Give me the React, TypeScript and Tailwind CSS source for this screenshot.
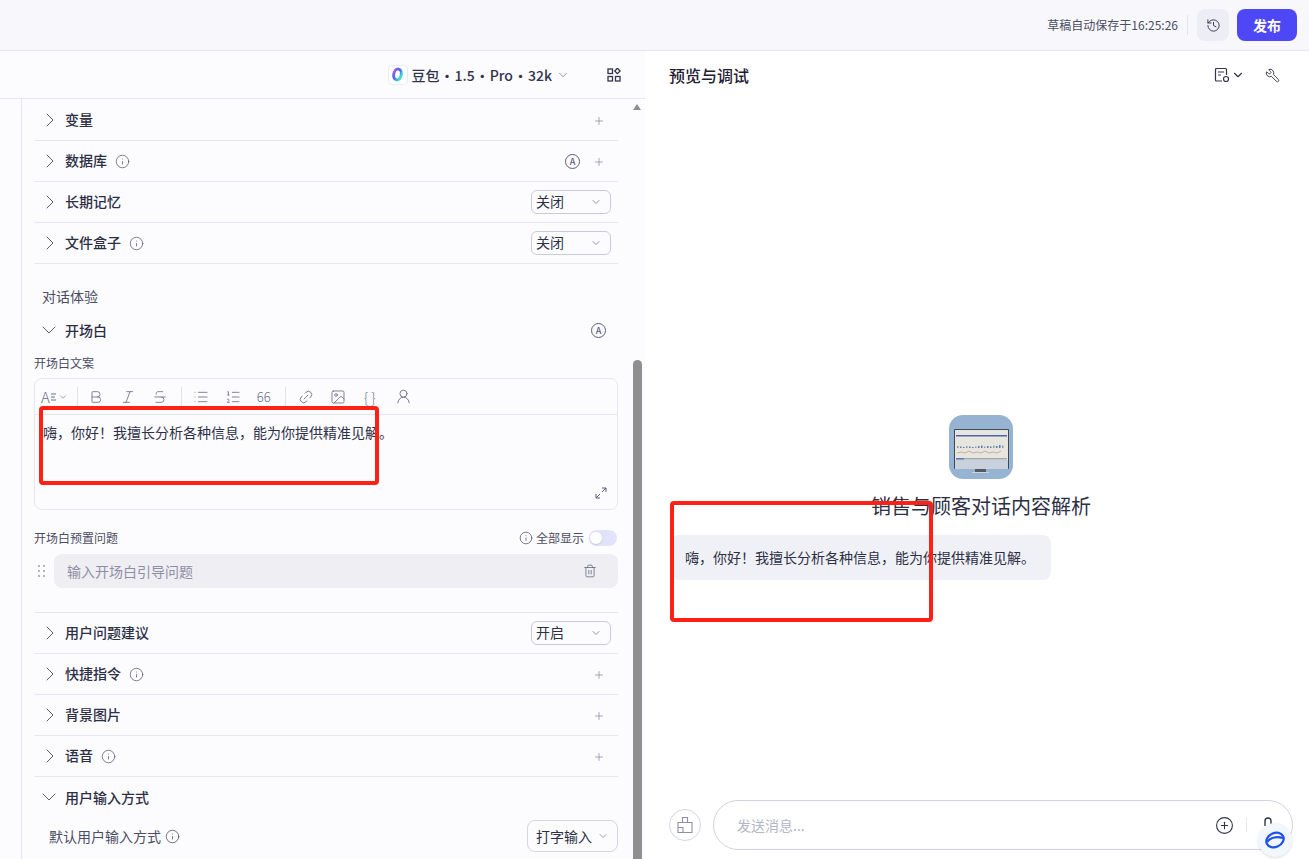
import React from "react";
import {
  ChevronRight, ChevronDown, Plus, Info, History, Wrench, Bold, Italic, Strikethrough, List, ListOrdered,
  Link2, Image, UserRound, Trash2, CirclePlus,
} from "lucide-react";

const font = "font-['Noto_Sans_CJK_SC','Noto_Sans',sans-serif]";

function CircleA() {
  return (
    <span className="flex h-[15px] w-[15px] items-center justify-center rounded-full border border-[#5b5d75] text-[9px] font-medium leading-none text-[#5b5d75]">
      A
    </span>
  );
}

function Sel({ label }: { label: string }) {
  return (
    <div className="flex h-[24px] w-[80px] items-center justify-between rounded-md border border-[#c9cbdc] pl-[4px] pr-[8px] text-[14px] text-[#2d2f45]">
      <span className="pb-[2px]">{label}</span>
      <ChevronDown size={12} strokeWidth={1.5} className="text-[#6b6d85]" />
    </div>
  );
}

function Row({ title, info, a, plus, sel }: { title: string; info?: boolean; a?: boolean; plus?: boolean; sel?: string }) {
  return (
    <div className="flex h-[41px] shrink-0 items-center border-b border-[#e6e7f0] pr-[7px]">
      <ChevronRight size={24} strokeWidth={1} className="ml-[4px] text-[#5b5d75]" />
      <span className="ml-[3px] pb-[2px] text-[14px] font-medium text-[#2d2f45]">{title}</span>
      {info && <Info size={15} strokeWidth={1.25} className="ml-[8px] text-[#5b5d75]" />}
      <div className="ml-auto flex items-center">
        {a && <CircleA />}
        {plus && <Plus size={12} strokeWidth={1.5} className="ml-[13px] mr-[6px] mt-[1px] text-[#8a8ca0]" />}
        {sel && <Sel label={sel} />}
      </div>
    </div>
  );
}

const bars = [8, 11, 14, 17, 20, 23, 26, 29, 32, 35, 38, 41, 44, 47, 50, 53];
const heights = [2, 1.5, 1, 2, 1.5, 1, 1.5, 2, 2.5, 1.5, 2, 1.5, 2.5, 2, 3, 2.5];

export default function App() {
  return (
    <div className={`relative flex h-screen w-full flex-col overflow-hidden bg-white ${font}`}>
      {/* Top bar */}
      <header className="flex h-[51px] shrink-0 items-center justify-end border-b border-[#e4e5f0] bg-[#f8f8fc] pr-[12px]">
        <span className="text-[12px] text-[#4b4d63]">草稿自动保存于16:25:26</span>
        <span className="ml-[9px] h-[20px] w-px bg-[#e4e5ec]" />
        <button className="ml-[9px] flex h-[32px] w-[32px] items-center justify-center rounded-lg bg-[#ecedf5] text-[#33344a]">
          <History size={15} strokeWidth={1.5} />
        </button>
        <button className="ml-[8px] flex h-[32px] w-[60px] items-center justify-center rounded-lg bg-[#4d47f5] text-[14px] font-bold text-white">
          发布
        </button>
      </header>

      <div className="flex min-h-0 flex-1">
        {/* Left */}
        <section className="flex w-[645px] shrink-0 flex-col bg-[#fcfcff]">
          <div className="flex h-[48px] shrink-0 items-center justify-end border-b border-[#e6e7f0] pr-[24px]">
            <span className="flex h-[20px] w-[20px] items-center justify-center rounded-[4px] border border-[#ebebf2] bg-white">
              <svg width="13" height="15" viewBox="0 0 13 15" fill="none">
                <defs>
                  <linearGradient id="dou" x1="0" y1="0" x2="1" y2="0.600">
                    <stop offset="0" stopColor="#b05cf0" />
                    <stop offset="0.55" stopColor="#3f6cf5" />
                    <stop offset="1" stopColor="#3fe0c8" />
                  </linearGradient>
                </defs>
                <ellipse cx="6.500" cy="7.500" rx="3.800" ry="5.500" stroke="url(#dou)" strokeWidth="3" transform="rotate(12 6.500 7.500)" />
              </svg>
            </span>
            <span className="ml-[4px] mt-[2px] flex items-center text-[14px] font-medium text-[#33344a]">
              <span>豆包</span>
              <span className="w-[15px] text-center">•</span>
              <span>1.5</span>
              <span className="w-[15px] text-center">•</span>
              <span>Pro</span>
              <span className="w-[15px] text-center">•</span>
              <span>32k</span>
            </span>
            <ChevronDown size={14} strokeWidth={1.25} className="ml-[4px] text-[#6b6d85]" />
            <svg className="ml-[37px] text-[#33344a]" width="14" height="14" viewBox="0 0 14 14" fill="none" stroke="currentColor" strokeWidth="1.3">
              <rect x="1" y="1" width="4.500" height="4.500" />
              <rect x="1" y="8.500" width="4.500" height="4.500" />
              <rect x="8.500" y="8.500" width="4.500" height="4.500" />
              <rect x="8.500" y="1" width="3.800" height="3.800" transform="rotate(45 10.400 2.900)" />
            </svg>
          </div>

          <div className="flex min-h-0 flex-1">
            <div className="w-[22px] shrink-0 border-r border-[#e6e7f0]" />
            <div className="flex min-w-0 flex-1 flex-col overflow-hidden pl-[12px] pr-[14px] pt-[1px]">
              <Row title="变量" plus />
              <Row title="数据库" info a plus />
              <Row title="长期记忆" sel="关闭" />
              <Row title="文件盒子" info sel="关闭" />

              <div className="mt-[23px] shrink-0 pl-[8px] text-[14px] leading-[18px] text-[#4b4d63]">对话体验</div>
              <div className="mt-[13px] flex h-[24px] shrink-0 items-center pr-[12px]">
                <ChevronDown size={24} strokeWidth={1} className="ml-[3px] text-[#5b5d75]" />
                <span className="ml-[4px] text-[14px] font-medium text-[#2d2f45]">开场白</span>
                <span className="ml-auto"><CircleA /></span>
              </div>

              <div className="mt-[13px] shrink-0 text-[12px] leading-[16px] text-[#4b4d63]">开场白文案</div>
              <div className="mt-[7px] flex h-[132px] shrink-0 flex-col rounded-lg border border-[#e6e7f0]">
                <div className="flex h-[36px] shrink-0 items-center border-b border-[#e6e7f0] pl-[6px] text-[#6b6d85]">
                  <span className="text-[15px] font-light leading-none">A</span>
                  <svg className="ml-[1px]" width="5" height="10" viewBox="0 0 5 10" stroke="currentColor" strokeWidth="1"><path d="M0 2h5M0 5h4M0 8h5" /></svg>
                  <ChevronDown size={10} strokeWidth={1.5} className="ml-[2px]" />
                  <span className="ml-[9px] mr-[10px] h-[20px] w-px bg-[#e0e1ea]" />
                  <Bold size={16} strokeWidth={1.25} />
                  <Italic size={16} strokeWidth={1.25} className="ml-[16px]" />
                  <Strikethrough size={16} strokeWidth={1.25} className="ml-[16px]" />
                  <span className="ml-[13px] mr-[11px] h-[20px] w-px bg-[#e0e1ea]" />
                  <List size={16} strokeWidth={1.25} />
                  <ListOrdered size={16} strokeWidth={1.25} className="ml-[16px]" />
                  <span className="ml-[15px] w-[16px] text-center text-[13px] font-light leading-none">66</span>
                  <span className="ml-[13px] mr-[12px] h-[20px] w-px bg-[#e0e1ea]" />
                  <Link2 size={16} strokeWidth={1.25} className="-rotate-45" />
                  <Image size={16} strokeWidth={1.25} className="ml-[16px]" />
                  <span className="ml-[14px] w-[20px] text-center text-[14px] font-light leading-none">{"{ }"}</span>
                  <UserRound size={17} strokeWidth={1.25} className="ml-[15px]" />
                </div>
                <div className="relative flex-1 pl-[8px] pt-[7px] text-[14px] leading-[20px] text-[#2d2f45]">
                  嗨，你好！我擅长分析各种信息，能为你提供精准见解。
                  <svg className="absolute bottom-[10px] right-[10px] text-[#5b5d75]" width="12" height="12" viewBox="0 0 12 12" fill="none" stroke="currentColor" strokeWidth="1">
                    <path d="M7 1h4v4M11 1 7 5M5 11H1V7M1 11l4-4" />
                  </svg>
                </div>
              </div>

              <div className="mt-[19px] flex h-[18px] shrink-0 items-center justify-between pr-[1px] text-[12px] text-[#4b4d63]">
                <span>开场白预置问题</span>
                <span className="flex items-center">
                  <Info size={14} strokeWidth={1.25} className="mr-[3px]" />
                  全部显示
                  <span className="ml-[5px] flex h-[16px] w-[28px] items-center rounded-full bg-[#e1e3fb]">
                    <span className="h-[12px] w-[12px] translate-x-[1px] rounded-full bg-white shadow" />
                  </span>
                </span>
              </div>

              <div className="mt-[7px] flex shrink-0 items-center">
                <svg className="ml-[3px] text-[#9a9cae]" width="10" height="14" viewBox="0 0 10 14" fill="currentColor">
                  <circle cx="2" cy="2" r="1" /><circle cx="7" cy="2" r="1" />
                  <circle cx="2" cy="7" r="1" /><circle cx="7" cy="7" r="1" />
                  <circle cx="2" cy="12" r="1" /><circle cx="7" cy="12" r="1" />
                </svg>
                <div className="ml-[7px] flex h-[34px] flex-1 items-center justify-between rounded-lg bg-[#eeeef3] pl-[13px] pr-[21px] text-[14px] text-[#8e8fa3]">
                  <span>输入开场白引导问题</span>
                  <Trash2 size={14} strokeWidth={1.25} className="text-[#5b5d75]" />
                </div>
              </div>

              <div className="mt-[24px] shrink-0 border-t border-[#e6e7f0]">
                <Row title="用户问题建议" sel="开启" />
                <Row title="快捷指令" info plus />
                <Row title="背景图片" plus />
                <Row title="语音" info plus />
              </div>

              <div className="mt-[8px] flex h-[24px] shrink-0 items-center">
                <ChevronDown size={24} strokeWidth={1} className="ml-[3px] text-[#5b5d75]" />
                <span className="ml-[4px] text-[14px] font-medium text-[#2d2f45]">用户输入方式</span>
              </div>
              <div className="mt-[11px] flex shrink-0 items-center justify-between">
                <span className="flex items-center pl-[15px] text-[14px] text-[#4b4d63]">
                  默认用户输入方式
                  <Info size={15} strokeWidth={1.25} className="ml-[4px]" />
                </span>
                <div className="flex h-[32px] w-[91px] items-center justify-between rounded-lg border border-[#d5d6e3] pl-[8px] pr-[8px] text-[14px] text-[#2d2f45]">
                  打字输入
                  <ChevronDown size={12} strokeWidth={1.25} className="text-[#6b6d85]" />
                </div>
              </div>
            </div>
            {/* Scrollbar */}
            <div className="flex w-[13px] shrink-0 flex-col items-center pr-[3px]">
              <span className="mt-[5px] h-0 w-0 border-x-[4px] border-b-[6px] border-x-transparent border-b-[#8f8f8f]" />
              <span className="mt-[250px] w-[9px] flex-1 rounded-t-full bg-[#8f8f8f]" />
            </div>
          </div>
        </section>

        {/* Right */}
        <section className="flex min-w-0 flex-1 flex-col bg-white">
          <div className="flex h-[48px] shrink-0 items-center pl-[24px] pr-[29px]">
            <h2 className="text-[16px] font-medium text-[#1f2033]">预览与调试</h2>
            <svg className="ml-auto text-[#33344a]" width="16" height="16" viewBox="0 0 16 16" fill="none" stroke="currentColor" strokeWidth="1.2">
              <path d="M8 14H2.500a1 1 0 0 1-1-1V2.500a1 1 0 0 1 1-1h9a1 1 0 0 1 1 1V8M4 5h6M4 8h3" />
              <circle cx="12" cy="12" r="2.500" />
            </svg>
            <ChevronDown size={14} strokeWidth={2} className="ml-[1px] text-[#33344a]" />
            <Wrench size={15} strokeWidth={1.5} className="ml-[20px] -scale-x-100 text-[#33344a]" />
          </div>

          <div className="flex min-h-0 flex-1 flex-col pt-[316px]">
            <div className="flex flex-col items-center pl-[8px]">
              <svg className="rounded-[14px]" width="64" height="64" viewBox="0 0 64 64">
                <rect width="64" height="64" fill="#97b3d2" />
                <rect x="5" y="14" width="55" height="40" rx="1" fill="#3d4a55" />
                <rect x="6" y="15" width="53" height="30" fill="#e6e6de" />
                <rect x="6" y="45" width="53" height="9" fill="#c9d2dc" />
                <rect x="7" y="20" width="51" height="1.500" fill="#5060b0" />
                {bars.map((x, i) => (
                  <rect key={x} x={x} y={33 - heights[i]} width="1.500" height={heights[i]} fill={i % 3 === 0 ? "#7da7a0" : "#5f77b5"} />
                ))}
                <path d="M8 38l4-1 4 1 4-2 4 2 4-1 4 1 4-2 4 2 4-1 4 1 4-2" stroke="#c2908c" strokeWidth=".7" fill="none" />
                <rect x="7" y="43" width="51" height="1.500" fill="#a3a9ab" />
                <rect x="7" y="43" width="8" height="1.500" fill="#5f77b5" />
                <rect x="26" y="54" width="11" height="3" fill="#4f5a63" />
                <rect x="23" y="57" width="17" height="1" fill="#c9d5e2" />
              </svg>
              <h1 className="mt-[15px] text-[20px] font-normal leading-[24px] text-[#2d2f45]">销售与顾客对话内容解析</h1>
            </div>
            <div className="ml-[25px] mt-[17px] w-fit rounded-lg bg-[#f0f1f7] py-[12px] pl-[15px] pr-[16px] text-[14px] leading-[21px] text-[#2d2f45]">
              嗨，你好！我擅长分析各种信息，能为你提供精准见解。
            </div>
            <div className="mt-auto flex items-center pb-[9px] pl-[24px] pr-[16px]">
              <span className="flex h-[32px] w-[32px] shrink-0 items-center justify-center rounded-full border border-[#d5d7e6] text-[#8e90a5]">
                <svg width="16" height="18" viewBox="0 0 16 18" fill="none" stroke="currentColor" strokeWidth="1.1">
                  <path d="M5.500 6V1.500h5V6M1 6.500h14V16.500H1ZM1 11.500h5v5" />
                </svg>
              </span>
              <div className="ml-[12px] flex h-[50px] flex-1 items-center rounded-[25px] border border-[#cfd1e2] pl-[23px] text-[14px] text-[#b4b5c5]">
                <span>发送消息...</span>
                <CirclePlus size={19} strokeWidth={1.4} className="ml-auto text-[#33344a]" />
                <span className="ml-[12px] h-[14px] w-px bg-[#e6e7f0]" />
                <svg className="ml-[15px] mr-[18px] text-[#33344a]" width="12" height="18" viewBox="0 0 12 18" fill="none" stroke="currentColor" strokeWidth="1.4">
                  <path d="M3 10V5a3 3 0 0 1 6 0v5" />
                </svg>
              </div>
            </div>
          </div>
        </section>
      </div>

      {/* Floating assistant button */}
      <span className="absolute left-[1258px] top-[823px] flex h-[34px] w-[34px] items-center justify-center rounded-full bg-[#f2f7fe] shadow-sm">
        <svg width="22" height="20" viewBox="0 0 22 20" fill="none" stroke="#1e50f0" strokeWidth="2.200">
          <ellipse cx="11" cy="10" rx="9" ry="7" transform="rotate(-25 11 10)" />
          <path d="M3 12c3-4 9-6 16-4" />
        </svg>
      </span>

      {/* Red annotation boxes */}
      <div className="pointer-events-none absolute left-[39px] top-[406px] h-[79px] w-[340px] rounded-[4px] border-[4px] border-[#ff2116]" />
      <div className="pointer-events-none absolute left-[670px] top-[501px] h-[121px] w-[263px] rounded-[4px] border-[4px] border-[#ff2116]" />
    </div>
  );
}
